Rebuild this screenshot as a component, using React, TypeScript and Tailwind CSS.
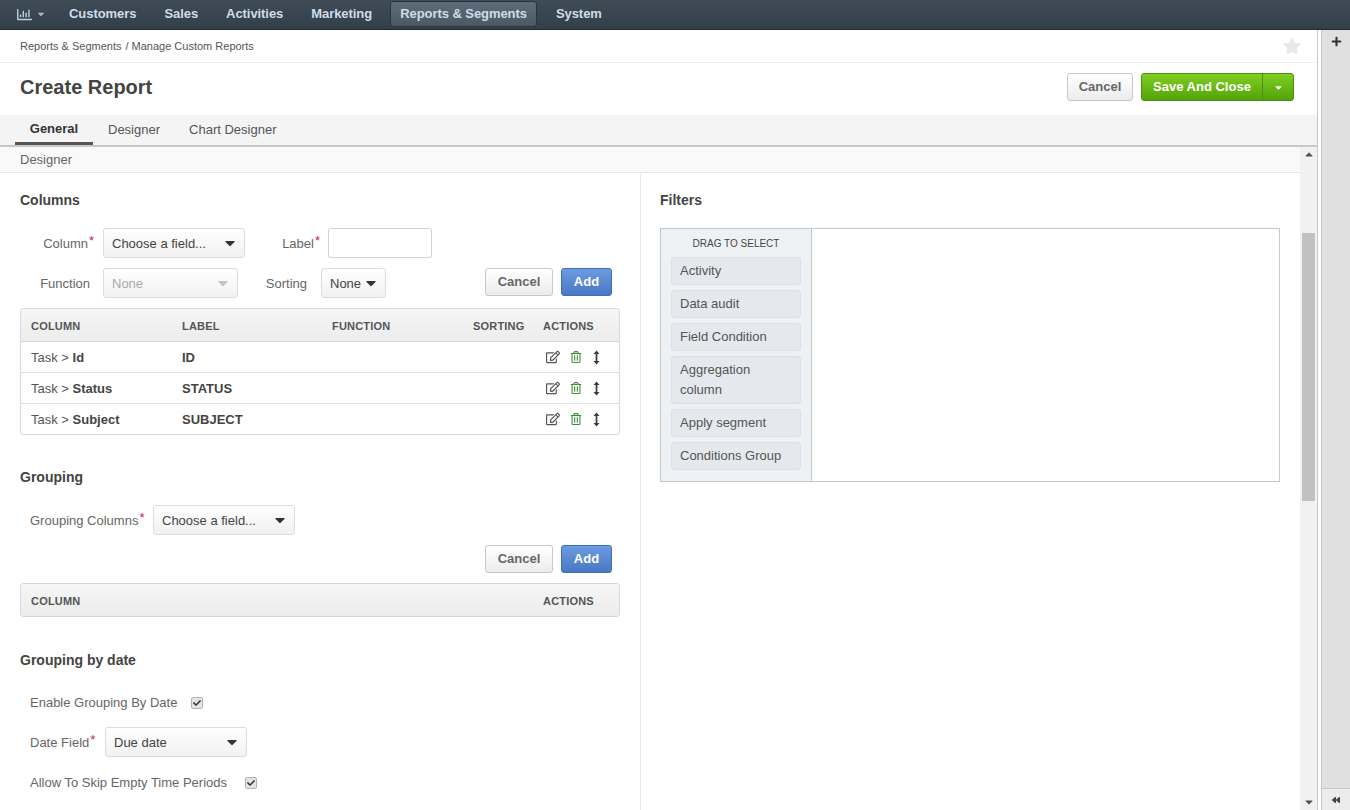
import { FaBackward, FaCaretDown, FaCheck, FaPlus, FaRegChartBar, FaRegEdit, FaRegTrashAlt, FaStar } from "react-icons/fa";

const navItems = ["Customers", "Sales", "Activities", "Marketing", "Reports & Segments", "System"];
const columnRows = [
  { field: "Id", label: "ID" },
  { field: "Status", label: "STATUS" },
  { field: "Subject", label: "SUBJECT" },
];
const filterItems = ["Activity", "Data audit", "Field Condition", "Aggregation column", "Apply segment", "Conditions Group"];

function Required() {
  return <span className="relative -top-[3px] ml-[1px] text-[#c81e3c]">*</span>;
}

function Select({ text, className, disabled }: { text: string; className: string; disabled?: boolean }) {
  return (
    <div
      className={`flex h-[30px] items-center justify-between rounded-[3px] border border-[#dcdcdc] bg-gradient-to-b from-white to-[#f1f1f1] pl-[8px] pr-[6px] text-[13px] ${
        disabled ? "text-[#a8a8a8]" : "text-[#444]"
      } ${className}`}
    >
      <span className="pt-[1px]">{text}</span>
      <FaCaretDown className={`text-[16px] ${disabled ? "text-[#c4c4c4]" : "text-[#333]"}`} />
    </div>
  );
}

function FormButtons() {
  return (
    <div className="flex gap-[8px]">
      <button className="h-[28px] w-[68px] rounded-[3px] border border-[#c8c8c8] bg-gradient-to-b from-white to-[#ececec] text-[13px] font-bold text-[#666]">
        Cancel
      </button>
      <button className="h-[28px] w-[51px] rounded-[3px] border border-[#3f6fb5] bg-gradient-to-b from-[#6b9be0] to-[#4a78c4] text-[13px] font-bold text-white">
        Add
      </button>
    </div>
  );
}

function SectionTitle({ children }: { children: string }) {
  return <h3 className="text-[14px] font-bold leading-[18px] text-[#444]">{children}</h3>;
}

function Checkbox() {
  return (
    <span className="flex h-[12px] w-[12px] items-center justify-center rounded-[2px] border border-[#b4b4b4] bg-[#e4e4e4]">
      <FaCheck className="text-[8px] text-[#333]" />
    </span>
  );
}

function ArrowsV() {
  return (
    <svg viewBox="0 0 8 16" className="h-[15px] w-[7px] fill-[#3c3c3c]">
      <path d="M4 0 7.500 4H5v8h2.500L4 16 .5 12H3V4H.5z" />
    </svg>
  );
}

export default function App() {
  return (
    <div className="flex h-[810px] w-[1350px] flex-col overflow-hidden bg-white font-['Liberation_Sans',Arial,sans-serif] text-[13px] text-[#555]">
      <nav className="flex h-[30px] shrink-0 items-center border-b border-[#222b33] bg-gradient-to-b from-[#3f4c57] to-[#333f49] pb-[1px] pl-[17px] tracking-[-0.06px]">
        <div className="mr-[9px] flex items-center gap-[4px] text-[#b9cfe4]">
          <FaRegChartBar className="text-[15px]" />
          <FaCaretDown className="text-[10px] text-[#aeb9c2]" />
        </div>
        {navItems.map((item) =>
          item === "Reports & Segments" ? (
            <div
              key={item}
              className="ml-[4px] mr-[5px] flex h-[26px] items-center rounded-[3px] border border-[#2a343c] bg-gradient-to-b from-[#5e6c79] to-[#4c5965] px-[9px] text-[13px] font-bold text-[#cfdce8]"
            >
              {item}
            </div>
          ) : (
            <div key={item} className="px-[14px] text-[13px] font-bold text-[#cfdce8]">
              {item}
            </div>
          ),
        )}
      </nav>

      <div className="flex min-h-0 flex-1">
        <main className="flex w-[1317px] shrink-0 flex-col">
          <div className="flex h-[33px] shrink-0 items-center justify-between border-b border-[#f0f0f0] pl-[20px] pr-[16px] text-[11px] text-[#555]">
            <span>
              Reports &amp; Segments<span className="ml-[4px] mr-[3px]">/</span>Manage Custom Reports
            </span>
            <FaStar className="text-[18px] text-[#e9e9e9]" />
          </div>
          <div className="flex h-[52px] shrink-0 items-center justify-between pb-[4px] pl-[20px] pr-[23px]">
            <h1 className="text-[20px] font-bold text-[#444]">Create Report</h1>
            <div className="flex items-center gap-[8px]">
              <button className="h-[28px] w-[66px] rounded-[3px] border border-[#c8c8c8] bg-gradient-to-b from-white to-[#ececec] text-[13px] font-bold text-[#666]">
                Cancel
              </button>
              <div className="flex h-[28px] w-[153px] rounded-[3px] border border-[#4b8f0c] bg-gradient-to-b from-[#7fcf20] to-[#54a308] text-white">
                <span className="flex w-[121px] items-center justify-center border-r border-[#4b8f0c] text-[13px] font-bold">
                  Save And Close
                </span>
                <span className="flex flex-1 items-center justify-center">
                  <FaCaretDown className="text-[11px]" />
                </span>
              </div>
            </div>
          </div>
          <div className="flex h-[32px] shrink-0 border-b-2 border-[#c8c8c8] bg-[#f4f4f4] pl-[15px] text-[13px]">
            <div className="-mb-[1px] flex h-[30px] w-[78px] items-center justify-center border-b-[3px] border-[#555] pt-[1px] font-bold text-[#333]">
              General
            </div>
            <div className="flex h-[30px] items-center pl-[15px] pr-[14px]">Designer</div>
            <div className="flex h-[30px] items-center pl-[15px]">Chart Designer</div>
          </div>

          <div className="flex min-h-0 flex-1">
            <div className="min-w-0 flex-1 overflow-hidden">
              <div className="flex h-[26px] items-center border-b border-[#e6e6e6] bg-[#f9f9f9] pl-[20px] text-[13px] text-[#666]">
                Designer
              </div>
              <div className="flex h-[640px]">
                <section className="w-[641px] shrink-0 border-r border-[#e8e8e8] pl-[20px] pr-[20px] pt-[18px]">
                  <SectionTitle>Columns</SectionTitle>
                  <div className="mt-[19px] flex items-center text-[#666]">
                    <label className="w-[83px] pr-[9px] pt-[1px] text-right">
                      Column
                      <Required />
                    </label>
                    <Select text="Choose a field..." className="w-[142px]" />
                    <label className="w-[83px] pr-[8px] pt-[1px] text-right">
                      Label
                      <Required />
                    </label>
                    <div className="h-[30px] w-[104px] rounded-[3px] border border-[#d0d0d0] bg-white" />
                  </div>
                  <div className="mt-[10px] flex items-center text-[#666]">
                    <label className="w-[70px] pt-[1px] text-right">Function</label>
                    <Select text="None" disabled className="ml-[13px] w-[135px]" />
                    <label className="w-[69px] pt-[1px] text-right">Sorting</label>
                    <Select text="None" className="ml-[14px] w-[65px]" />
                    <div className="ml-auto mb-[2px] mr-[8px]">
                      <FormButtons />
                    </div>
                  </div>

                  <div className="mt-[10px] overflow-hidden rounded-[3px] border border-[#d8d8d8]">
                    <div className="grid h-[33px] grid-cols-[151px_150px_141px_70px_1fr] items-center border-b border-[#d8d8d8] bg-gradient-to-b from-[#f6f6f6] to-[#ececec] pl-[10px] pt-[2px] text-[11px] font-bold tracking-[0.2px] text-[#555]">
                      <span>COLUMN</span>
                      <span>LABEL</span>
                      <span>FUNCTION</span>
                      <span>SORTING</span>
                      <span>ACTIONS</span>
                    </div>
                    {columnRows.map((row, i) => (
                      <div
                        key={row.field}
                        className={`grid grid-cols-[151px_291px_70px_1fr] items-center pl-[10px] text-[#555] ${
                          i < columnRows.length - 1 ? "h-[31px] border-b border-[#e2e2e2]" : "h-[30px]"
                        }`}
                      >
                        <span className="pt-[2px]">
                          Task &gt; <b className="text-[#444]">{row.field}</b>
                        </span>
                        <b className="pt-[2px] text-[#444]">{row.label}</b>
                        <span />
                        <span className="flex items-center pl-[3px]">
                          <FaRegEdit className="text-[14px] text-[#555]" />
                          <FaRegTrashAlt className="ml-[10px] text-[12px] text-[#3f8f3f]" />
                          <span className="ml-[11px]">
                            <ArrowsV />
                          </span>
                        </span>
                      </div>
                    ))}
                  </div>

                  <div className="mt-[33px]">
                    <SectionTitle>Grouping</SectionTitle>
                  </div>
                  <div className="mt-[19px] flex items-center pl-[10px] text-[#666]">
                    <label className="w-[123px] pt-[1px]">
                      Grouping Columns
                      <Required />
                    </label>
                    <Select text="Choose a field..." className="w-[142px]" />
                  </div>
                  <div className="mt-[10px] flex justify-end pr-[8px]">
                    <FormButtons />
                  </div>
                  <div className="mt-[10px] grid h-[34px] grid-cols-[512px_1fr] items-center rounded-[3px] border border-[#d8d8d8] bg-gradient-to-b from-[#f6f6f6] to-[#ececec] pl-[10px] pt-[2px] text-[11px] font-bold tracking-[0.2px] text-[#555]">
                    <span>COLUMN</span>
                    <span>ACTIONS</span>
                  </div>

                  <div className="mt-[34px]">
                    <SectionTitle>Grouping by date</SectionTitle>
                  </div>
                  <div className="mt-[25px] flex h-[18px] items-center gap-[14px] pl-[10px] text-[#666]">
                    <span>Enable Grouping By Date</span>
                    <Checkbox />
                  </div>
                  <div className="mt-[15px] flex items-center pl-[10px] text-[#666]">
                    <label className="w-[75px] pt-[1px]">
                      Date Field
                      <Required />
                    </label>
                    <Select text="Due date" className="w-[142px]" />
                  </div>
                  <div className="mt-[17px] flex h-[18px] items-center gap-[14px] pl-[10px] text-[#666]">
                    <span>Allow To Skip Empty Time Periods</span>
                    <span className="ml-[4px]">
                      <Checkbox />
                    </span>
                  </div>
                </section>

                <section className="flex-1 pl-[19px] pr-[20px] pt-[18px]">
                  <SectionTitle>Filters</SectionTitle>
                  <div className="mt-[19px] flex h-[254px] border border-[#c8c8c8]">
                    <div className="w-[151px] border-r border-[#c8c8c8] bg-[#eef1f4] px-[10px] pt-[8px]">
                      <div className="mb-[6px] text-center text-[10px] leading-[14px] text-[#444]">DRAG TO SELECT</div>
                      <div className="flex flex-col gap-[5px]">
                        {filterItems.map((item) => (
                          <div
                            key={item}
                            className="rounded-[3px] border border-[#dde1e7] bg-[#e5e8ec] px-[8px] py-[3px] text-[13px] leading-[20px] text-[#555]"
                          >
                            {item}
                          </div>
                        ))}
                      </div>
                    </div>
                  </div>
                </section>
              </div>
            </div>

            <div className="flex w-[17px] shrink-0 flex-col items-center bg-[#f1f1f1]">
              <FaCaretDown className="mt-[2px] h-[12px] shrink-0 rotate-180 text-[12px] text-[#505050]" />
              <div className="mt-[72px] h-[268px] w-[13px] shrink-0 bg-[#c1c1c1]" />
              <div className="flex-1" />
              <FaCaretDown className="mb-[2px] h-[12px] shrink-0 text-[12px] text-[#505050]" />
            </div>
          </div>
        </main>

        <aside className="flex flex-1 border-l border-[#c8c8c8]">
          <div className="w-[4px] shrink-0 border-r border-[#c8c8c8] bg-white" />
          <div className="flex flex-1 flex-col bg-[#e0e0e0]">
            <div className="flex h-[23px] items-center justify-center">
              <FaPlus className="text-[11px] text-[#333]" />
            </div>
            <div className="flex-1" />
            <div className="flex h-[22px] items-center justify-center border-t border-[#c8c8c8] bg-[#ececec]">
              <FaBackward className="text-[8px] text-[#444]" />
            </div>
          </div>
        </aside>
      </div>
    </div>
  );
}
